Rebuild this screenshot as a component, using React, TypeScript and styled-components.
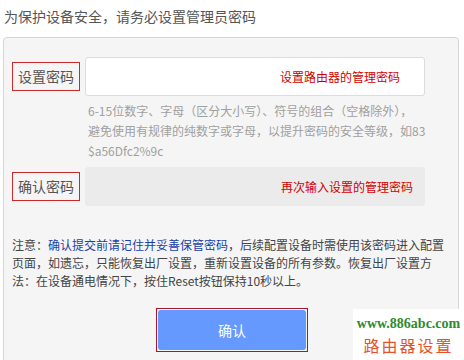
import React from 'react';
import styled, { createGlobalStyle } from 'styled-components';

const GlobalStyle = createGlobalStyle`
  html, body {
    margin: 0;
    padding: 0;
    background: #fff;
  }
  body {
    font-family: "Noto Sans CJK SC", "Liberation Sans", sans-serif;
    width: 464px;
    height: 360px;
    overflow: hidden;
  }
`;

const Page = styled.div`
  position: relative;
  width: 464px;
  height: 360px;
`;

const Title = styled.div`
  height: 37px;
  padding-left: 4px;
  font-size: 14px;
  line-height: 32px;
  color: #555;
`;

const Panel = styled.div`
  margin-left: 3px;
  width: 454px;
  height: 318px;
  box-sizing: content-box;
  border: 1px solid #d6d6d6;
  border-radius: 4px;
  background: #f5f5f5;
  padding: 19px 0 0 0;
`;

const Row = styled.div`
  display: flex;
  align-items: center;
  gap: 5px;
  padding-left: 8px;
`;

const Label = styled.div`
  width: 68px;
  height: 29px;
  box-sizing: border-box;
  border: 1px solid #cc2a2a;
  font-size: 14px;
  line-height: 27px;
  text-align: center;
  color: #555;
`;

const Field = styled.div<{ $disabled?: boolean }>`
  width: 340px;
  height: 39px;
  box-sizing: border-box;
  border: 1px solid ${(p) => (p.$disabled ? '#ebebeb' : '#dcdcdc')};
  border-radius: 3px;
  background: ${(p) => (p.$disabled ? '#ebebeb' : '#fff')};
  display: flex;
  align-items: center;
  padding-left: ${(p) => (p.$disabled ? '195px' : '194px')};
  font-size: 12px;
  color: #d40000;
  white-space: nowrap;
`;

const Hint = styled.div`
  margin: 5px 0 6px 84px;
  font-size: 12px;
  line-height: 20px;
  color: #a0a0a0;
  white-space: nowrap;
`;

const Note = styled.div`
  margin: 30px 0 0 8px;
  font-size: 12px;
  line-height: 18px;
  color: #444;
  white-space: nowrap;
`;

const Em = styled.span`
  color: #1a3fa8;
`;

const ButtonWrap = styled.div`
  margin: 18px auto 0;
  width: 152px;
  height: 44px;
  box-sizing: border-box;
  border: 1px solid #a8182a;
  padding: 1px;
  transform: translateX(1px);
`;

const Button = styled.button`
  width: 100%;
  height: 100%;
  border: none;
  border-radius: 3px;
  background: #6699fe;
  color: #fff;
  font-family: "Noto Sans CJK SC", sans-serif;
  font-size: 14px;
  cursor: pointer;
`;

const Watermark = styled.div`
  position: absolute;
  left: 353px;
  top: 309px;
  width: 111px;
  height: 51px;
  background: #fff;
  display: flex;
  flex-direction: column;
  align-items: center;
`;

const Site = styled.div`
  margin-top: 6px;
  font-family: "Liberation Serif", serif;
  font-weight: bold;
  font-size: 14px;
  line-height: 18px;
  color: #2e8b2e;
`;

const Brand = styled.div`
  margin-top: 1px;
  font-family: "Noto Sans CJK SC", sans-serif;
  font-size: 16px;
  line-height: 22px;
  letter-spacing: 2px;
  color: #e8502a;
`;

export default function App() {
  return (
    <Page>
      <GlobalStyle />
      <Title>为保护设备安全，请务必设置管理员密码</Title>
      <Panel>
        <Row>
          <Label>设置密码</Label>
          <Field>设置路由器的管理密码</Field>
        </Row>
        <Hint>
          6-15位数字、字母（区分大小写）、符号的组合（空格除外），
          <br />
          避免使用有规律的纯数字或字母，以提升密码的安全等级，如83
          <br />
          $a56Dfc2%9c
        </Hint>
        <Row>
          <Label>确认密码</Label>
          <Field $disabled>再次输入设置的管理密码</Field>
        </Row>
        <Note>
          注意：<Em>确认提交前请记住并妥善保管密码</Em>，后续配置设备时需使用该密码进入配置
          <br />
          页面，如遗忘，只能恢复出厂设置，重新设置设备的所有参数。恢复出厂设置方
          <br />
          法：在设备通电情况下，按住Reset按钮保持10秒以上。
        </Note>
        <ButtonWrap>
          <Button>确认</Button>
        </ButtonWrap>
      </Panel>
      <Watermark>
        <Site>www.886abc.com</Site>
        <Brand>路由器设置</Brand>
      </Watermark>
    </Page>
  );
}
